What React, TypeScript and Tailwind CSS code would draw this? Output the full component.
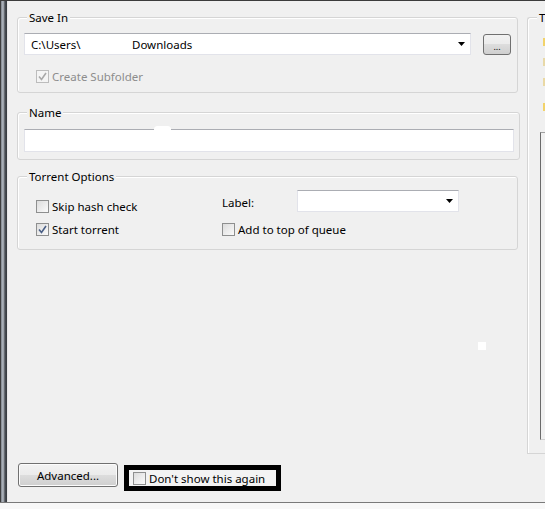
const font = "font-['Segoe_UI','Noto_Sans',sans-serif]";

const Check = ({ checked = false, disabled = false }: { checked?: boolean; disabled?: boolean }) => (
  <span
    className={`relative flex h-[13px] w-[13px] shrink-0 items-center justify-center border ${
      disabled ? "border-[#bcbcbc] bg-[#f4f4f4]" : "border-[#8e8f8f] bg-[linear-gradient(135deg,#dcdcdc,#fbfbfb)]"
    }`}
  >
    {checked && (
      <svg width="9" height="9" viewBox="0 0 9 9">
        <path
          d="M1 4.5 L3.5 7.5 L8 1"
          fill="none"
          stroke={disabled ? "#a8a8a8" : "#4a5f86"}
          strokeWidth="1.6"
        />
      </svg>
    )}
  </span>
);

const CheckRow = ({ label, checked, disabled }: { label: string; checked?: boolean; disabled?: boolean }) => (
  <div className="flex items-center gap-[3px]">
    <Check checked={checked} disabled={disabled} />
    <span className={disabled ? "text-[#8d8d8d]" : "text-black"}>{label}</span>
  </div>
);

const Arrow = () => (
  <svg width="8" height="5" viewBox="0 0 8 5">
    <path d="M0 0 H7 L3.5 4 Z" fill="#000" />
  </svg>
);

const Group = ({ title, className, children }: { title: string; className: string; children?: React.ReactNode }) => (
  <div className={`relative shrink-0 rounded-[3px] border border-[#d5d5d5] shadow-[inset_1px_1px_0_#fff] ${className}`}>
    <span className="absolute -top-[8px] left-[9px] bg-[#f0f0f0] px-[2px] leading-[15px]">{title}</span>
    {children}
  </div>
);

export default function App() {
  return (
    <div className={`${font} relative flex h-[509px] w-[545px] flex-col overflow-hidden bg-[#f0f0f0] text-[11.5px] leading-[15px] text-black`}>
      <div className="h-[1px] bg-[#3c3c3c]" />
      <div className="flex flex-1">
        {/* window frame */}
        <div className="w-[8px] shrink-0 bg-[linear-gradient(to_right,#3e3e3e_0,#3e3e3e_1px,#7d838b_1px,#b8bec6_3px,#4a4e54_5px,#34383c_7px,#e8e8e8_7px)]" />

        <div className="ml-[9px] flex w-[503px] shrink-0 flex-col pt-[16px] pb-[11px]">
          <Group title="Save In" className="h-[76px] w-[501px] pl-[6px] pt-[15px]">
            <div className="flex items-start gap-[12px]">
              <div className="flex h-[22px] w-[447px] items-center justify-between border border-[#e2e3ea] border-t-[#abadb3] bg-white pl-[6px] pr-[4px]">
                <span className="flex">
                  <span className="w-[101px]">C:\Users\</span>
                  <span>Downloads</span>
                </span>
                <Arrow />
              </div>
              <button className="mt-[1px] flex h-[21px] w-[28px] items-end justify-center rounded-[3px] border border-[#707070] bg-[linear-gradient(#f2f2f2_0,#ebebeb_50%,#dddddd_50%,#cfcfcf_100%)] pb-[3px] text-[9px] leading-[9px]">
                ...
              </button>
            </div>
            <div className="ml-[12px] mt-[14px]">
              <CheckRow label="Create Subfolder" checked disabled />
            </div>
          </Group>

          <Group title="Name" className="mt-[19px] h-[48px] w-[503px] pl-[6px] pt-[16px]">
            <div className="h-[23px] w-[490px] border border-[#e2e3ea] border-t-[#abadb3] bg-white" />
            <div className="absolute left-[136px] top-[13px] h-[7px] w-[17px] rounded-full bg-white" />
          </Group>

          <Group title="Torrent Options" className="mt-[16px] h-[74px] w-[501px] pl-[18px] pt-[13px]">
            <div className="flex items-start">
              <div className="mt-[9px] w-[186px]">
                <CheckRow label="Skip hash check" />
              </div>
              <span className="mt-[5px] w-[75px]">Label:</span>
              <div className="flex h-[22px] w-[162px] items-center justify-end border border-[#e2e3ea] border-t-[#abadb3] bg-white pr-[4px]">
                <Arrow />
              </div>
            </div>
            <div className="mt-[8px] flex">
              <div className="w-[186px]">
                <CheckRow label="Start torrent" checked />
              </div>
              <CheckRow label="Add to top of queue" />
            </div>
          </Group>

          <div className="flex-1" />

          <div className="flex items-start">
            <button className="ml-[1px] flex h-[24px] w-[100px] items-center justify-center rounded-[3px] border border-[#707070] bg-[linear-gradient(#f2f2f2_0,#ebebeb_50%,#dddddd_50%,#cfcfcf_100%)] shadow-[inset_0_0_0_1px_#fcfcfc]">
              Advanced...
            </button>
            <div className="ml-[6px] mt-[2px] flex h-[26px] w-[157px] items-center border-[5px] border-black bg-[#f3f3f3] pl-[4px]">
              <CheckRow label="Don't show this again" />
            </div>
          </div>
        </div>

        {/* right-hand group, cut off by the window edge */}
        <div className="relative ml-[7px] mt-[16px] h-[437px] min-w-0 flex-1 rounded-tl-[3px] border-l border-t border-b border-[#d5d5d5] shadow-[inset_1px_1px_0_#fff]">
          <span className="absolute -top-[8px] left-[9px] bg-[#f0f0f0] px-[2px] leading-[15px]">T</span>
          <div className="ml-[15px] mt-[20px] flex flex-col gap-[12px]">
            <div className="h-[8px] w-[3px] bg-[#f2d36a]" />
            <div className="h-[8px] w-[3px] bg-[#e8d9a8]" />
            <div className="h-[8px] w-[3px] bg-[#ead9a4]" />
            <div className="mt-[5px] h-[8px] w-[3px] bg-[#f2d36a]" />
          </div>
          <div className="ml-[12px] mt-[21px] h-[308px] border-l border-t border-b border-l-[#6a6a6a] border-t-[#a0a0a0] border-b-[#d0d0d0]" />
        </div>
      </div>
      <div className="h-[1px] bg-[#7a7a7a]" />
      <div className="h-[6px] bg-[#f8f8f8]" />

      <div className="absolute left-[478px] top-[342px] h-[8px] w-[8px] bg-white" />
    </div>
  );
}
